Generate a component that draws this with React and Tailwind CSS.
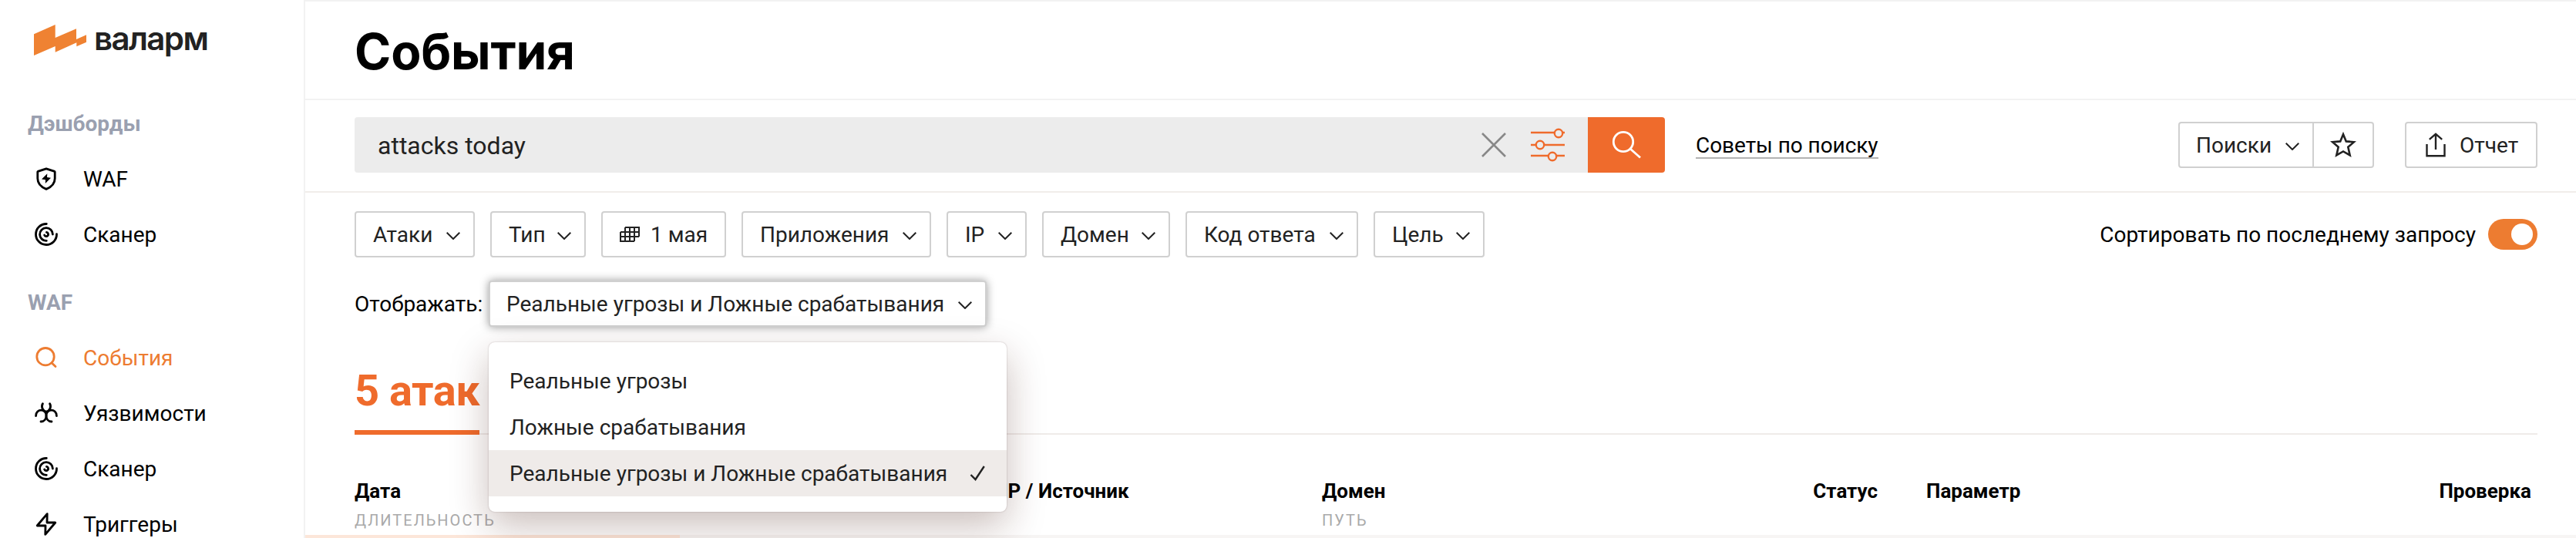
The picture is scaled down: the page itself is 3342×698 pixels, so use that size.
import React from "react";

function Chevron() {
  return (
    <svg className="w-[18px] h-[10px] shrink-0 mt-1" viewBox="0 0 18 10" fill="none" stroke="#222" strokeWidth="2">
      <path d="M0.7 0.8 L9 9 L17.3 0.8" />
    </svg>
  );
}

function Label({ children }) {
  return <span className="mt-[2px]">{children}</span>;
}

function Logo() {
  return (
    <div className="flex items-start h-[124px] pl-11 pt-8">
      <svg className="w-[68px] h-10 shrink-0" viewBox="0 0 68 40" fill="#ef8232">
        <path d="M0 12.3 L27.7 0 V17 L55 5.3 V19 L68 13.3 V22.7 L55.3 28.3 V23.3 L27.7 35.7 V28 L0 40 Z" />
      </svg>
      <span className="ml-[10px] mt-[-8px] font-['Inter',sans-serif] font-semibold text-[42px] leading-[51px] tracking-[-1.6px] text-[#222]">валарм</span>
    </div>
  );
}

const stroke = { fill: "none", stroke: "currentColor", strokeWidth: 2.8, strokeLinecap: "round", strokeLinejoin: "round" };

function ShieldIcon() {
  return (
    <svg className="w-8 h-8" viewBox="0 0 32 32" {...stroke}>
      <path d="M16 2.8 L26.8 6.4 Q27.2 6.6 27.2 7 V15.5 C27.2 22.4 22.4 26.8 16 29.4 C9.6 26.8 4.8 22.4 4.8 15.5 V7 Q4.8 6.6 5.2 6.4 Z" />
      <path d="M17.3 9.3 L10 16.4 L15 17.3 L14.8 22 L22 14.8 L17 14 Z" fill="currentColor" stroke="none" />
    </svg>
  );
}

function ScanIcon() {
  return (
    <svg className="w-8 h-8" viewBox="0 0 32 32" {...stroke}>
      <path d="M16.3 2.5 A13.5 13.5 0 1 0 29.5 15.7" />
      <path d="M24.4 16 A8.4 8.4 0 1 0 16.3 24.4" />
      <path d="M16.4 13.4 A2.6 2.6 0 1 1 13.6 17" />
    </svg>
  );
}

function SearchIcon() {
  return (
    <svg className="w-8 h-8" viewBox="0 0 32 32" {...stroke}>
      <circle cx="15" cy="14.7" r="11.2" />
      <path d="M23 22.7 L28 27.6" />
    </svg>
  );
}

function BiohazardIcon() {
  return (
    <svg className="w-8 h-8" viewBox="0 0 32 32" {...stroke}>
      <path d="M11.4 3.8 A6.9 6.9 0 0 0 16 14 A6.9 6.9 0 0 0 20.6 3.8" />
      <path d="M2.6 19.6 C2.4 14.6 6 12.2 9.6 12.2 C13.6 12.2 16 15.6 16 19 C16 23.8 13 27 9 27" />
      <path d="M29.4 19.6 C29.6 14.6 26 12.2 22.4 12.2 C18.4 12.2 16 15.6 16 19 C16 23.8 19 27 23 27" />
    </svg>
  );
}

function BoltIcon() {
  return (
    <svg className="w-8 h-8" viewBox="0 0 32 32" {...stroke}>
      <path d="M17.2 2.6 L4.2 18 H15 L14.8 29.4 L27.8 14 H17 Z" />
    </svg>
  );
}

function NavHeading({ children }) {
  return <div className="flex items-center h-[72px] pl-9 font-bold text-[28px] text-[#9aa0b0]"><Label>{children}</Label></div>;
}

function NavItem({ icon, label, active }) {
  return (
    <div className={"flex items-center h-[72px] pl-11 gap-8 text-[28px] " + (active ? "text-[#ed7c31]" : "text-black")}>
      {icon}
      <Label>{label}</Label>
    </div>
  );
}

function Sidebar() {
  return (
    <aside className="w-[396px] shrink-0 border-r-2 border-[#f2f2f2] h-[698px] overflow-hidden bg-white">
      <Logo />
      <NavHeading>Дэшборды</NavHeading>
      <NavItem icon={<ShieldIcon />} label="WAF" />
      <NavItem icon={<ScanIcon />} label="Сканер" />
      <div className="h-4" />
      <NavHeading>WAF</NavHeading>
      <NavItem icon={<SearchIcon />} label="События" active />
      <NavItem icon={<BiohazardIcon />} label="Уязвимости" />
      <NavItem icon={<ScanIcon />} label="Сканер" />
      <NavItem icon={<BoltIcon />} label="Триггеры" />
    </aside>
  );
}

function SearchBar() {
  return (
    <div className="flex items-center h-[120px] pl-16 pr-[50px] border-b-2 border-[#f1edea]">
      <div className="flex items-center w-[1600px] h-[72px] mt-[-2px] rounded-l bg-[#ececec] px-[30px]">
        <span className="flex-1 mt-[2px] text-[32px] leading-[1.2] text-[#222]">attacks today</span>
        <svg className="w-8 h-8 mr-8" viewBox="0 0 32 32" fill="none" stroke="#888" strokeWidth="2.6">
          <path d="M1 1 L31 31 M31 1 L1 31" />
        </svg>
        <svg className="w-11 h-11" viewBox="0 0 44 44" fill="none" stroke="#ef6b2c" strokeWidth="2.4">
          <path d="M0 6 H30.5 M41.5 6 H44 M0 22 H6.5 M17.5 22 H44 M0 36 H22.5 M33.5 36 H44" />
          <circle cx="36" cy="7" r="5.2" />
          <circle cx="12" cy="22" r="5.2" />
          <circle cx="28" cy="37" r="5.2" />
        </svg>
      </div>
      <div className="flex items-center justify-center w-[100px] h-[72px] mt-[-2px] rounded-r bg-[#ef6b2c]">
        <svg className="w-10 h-10" viewBox="0 0 40 40" fill="none" stroke="#fff" strokeWidth="2.8">
          <circle cx="16" cy="16" r="12.7" />
          <path d="M25 25 L38 36.5" />
        </svg>
      </div>
      <span className="ml-10 mt-[-2px] h-[36px] leading-[37px] tracking-[-0.06px] text-[28px] text-black border-b-2 border-[#b3b3b3]">Советы по поиску</span>
      <div className="flex-1" />
      <div className="flex h-[60px] mt-[-2px] border-2 border-[#d0d0d0] rounded text-[28px] text-[#222]">
        <div className="flex items-center justify-between w-[174px] pl-[21px] pr-[17px] border-r-2 border-[#d0d0d0]">
          <Label>Поиски</Label>
          <Chevron />
        </div>
        <div className="flex items-center justify-center w-[76px]">
          <svg className="w-[34px] h-[34px]" viewBox="0 0 34 34" fill="none" stroke="#222" strokeWidth="2.6">
            <path d="M17 3.2 L20.8 12.4 L31 13.2 L23.3 19.8 L25.7 30.4 L17 25.4 L8.3 30.4 L10.7 19.8 L3 13.2 L13.2 12.4 Z" />
          </svg>
        </div>
      </div>
      <div className="flex items-center w-[172px] h-[60px] mt-[-2px] ml-10 pl-[25px] border-2 border-[#d0d0d0] rounded text-[28px] text-[#222]">
        <svg className="w-[26px] h-8 mr-[18px]" viewBox="0 0 26 32" fill="none" stroke="#222" strokeWidth="2.4">
          <path d="M1.5 15 V30.2 H24.5 V15 M13 22 V2.5 M4.8 8.8 L13 1.8 L21.2 8.8" />
        </svg>
        <Label>Отчет</Label>
      </div>
    </div>
  );
}

function Filter({ label, width }) {
  return (
    <div className={"flex items-center justify-between h-[60px] pl-[22px] pr-[17px] border-2 border-[#d0d0d0] rounded " + width}>
      <Label>{label}</Label>
      <Chevron />
    </div>
  );
}

function Filters() {
  return (
    <div className="flex items-center gap-5 h-[60px] text-[28px] text-[#222]">
      <Filter label="Атаки" width="w-[156px]" />
      <Filter label="Тип" width="w-[124px]" />
      <div className="flex items-center h-[60px] w-[162px] pl-[22px] border-2 border-[#d0d0d0] rounded">
        <svg className="w-[26px] h-5 mr-[14px]" viewBox="0 0 26 20" fill="none" stroke="#222" strokeWidth="2">
          <path d="M7 1 H25 V13 M7 1 V7 M1 7 H25 M1 7 V19 H19 M1 13 H25 M7 7 V19 M13 1 V19 M19 1 V19" />
        </svg>
        <Label>1 мая</Label>
      </div>
      <Filter label="Приложения" width="w-[246px]" />
      <Filter label="IP" width="w-[104px]" />
      <Filter label="Домен" width="w-[166px]" />
      <Filter label="Код ответа" width="w-[224px]" />
      <Filter label="Цель" width="w-[144px]" />
      <div className="flex-1" />
      <span className="mr-[-4px] mt-[2px] text-black">Сортировать по последнему запросу</span>
      <div className="flex items-center justify-end w-16 h-10 rounded-full bg-[#ed7c31] pr-[6px]">
        <div className="w-7 h-7 rounded-full bg-white" />
      </div>
    </div>
  );
}

function DisplaySelect() {
  return (
    <div className="flex items-center h-[60px] mt-[30px] text-[28px]">
      <span className="w-[174px] mt-[2px] text-black">Отображать:</span>
      <div className="relative w-[646px] h-[60px] text-[#222]">
        <div className="flex items-center justify-between h-[60px] pl-[21px] pr-[17px] border-2 border-[#d0d0d0] rounded bg-white shadow-[0_0_12px_rgba(0,0,0,0.4)]">
          <Label>Реальные угрозы и Ложные срабатывания</Label>
          <Chevron />
        </div>
        <div className="absolute left-0 top-20 z-10 w-[672px] h-[220px] py-5 rounded-lg bg-white shadow-[0_0_2px_rgba(60,30,30,0.3),0_18px_50px_rgba(66,20,10,0.28)]">
          <div className="flex items-center h-[60px] pl-[27px]"><Label>Реальные угрозы</Label></div>
          <div className="flex items-center h-[60px] pl-[27px]"><Label>Ложные срабатывания</Label></div>
          <div className="flex items-center justify-between h-[60px] pl-[27px] pr-7 bg-[#efebe9]">
            <Label>Реальные угрозы и Ложные срабатывания</Label>
            <svg className="w-5 h-5" viewBox="0 0 20 20" fill="none" stroke="#222" strokeWidth="2.4">
              <path d="M1.5 12 L7.5 18 L18.8 1" />
            </svg>
          </div>
        </div>
      </div>
    </div>
  );
}

function TableHead() {
  return (
    <div className="grid grid-cols-[840px_415px_721px_856px] items-start h-[130px] pt-[55px] text-[26px] leading-[36px] font-bold text-black">
      <div>
        Дата
        <div className="font-normal text-[20px] leading-[40px] tracking-[2px] text-[#aaa]">ДЛИТЕЛЬНОСТЬ</div>
      </div>
      <div className="pl-[3px]"><span className="ml-[-3px]">IP / Источник</span></div>
      <div>
        Домен
        <div className="font-normal text-[20px] leading-[40px] tracking-[2px] text-[#aaa]">ПУТЬ</div>
      </div>
      <div className="flex">
        <span className="w-0 flex justify-end">Статус</span>
        <span className="ml-[63px] flex-1">Параметр</span>
        <span className="mr-2">Проверка</span>
      </div>
    </div>
  );
}

export default function App() {
  return (
    <div className="flex w-[3342px] h-[698px] overflow-hidden bg-white font-['Roboto','Liberation_Sans',sans-serif] leading-[1.2] whitespace-nowrap">
      <Sidebar />
      <main className="flex flex-col flex-1 min-w-0">
        <div className="flex items-center h-[130px] border-y-2 border-[#f2f2f2] pl-16 pt-1">
          <h1 className="text-[64px] leading-[76px] tracking-[-0.2px] font-bold text-black font-['Inter',sans-serif]">События</h1>
        </div>
        <SearchBar />
        <section className="pl-16 pr-[50px] pt-6">
          <Filters />
          <DisplaySelect />
          <div className="flex h-[100px] mt-10 border-b-2 border-[#efebe9]">
            <div className="h-[100px] w-[162px] pt-[9px] text-[56px] leading-[68px] tracking-[-0.5px] font-bold text-[#ef6b2c] border-b-[6px] border-[#ef6b2c]">5 атак</div>
          </div>
          <TableHead />
        </section>
        <div className="flex h-1 bg-[#f7f5f4]">
          <div className="w-[486px] h-1 bg-[#fce6d9]" />
        </div>
      </main>
    </div>
  );
}
